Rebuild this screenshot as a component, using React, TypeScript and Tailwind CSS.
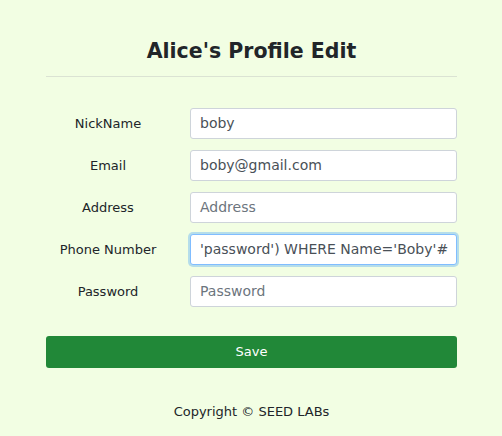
import React from "react";

const rows = [
  { label: "NickName", value: "boby" },
  { label: "Email", value: "boby@gmail.com" },
  { label: "Address", placeholder: "Address" },
  { label: "Phone Number", value: "'password') WHERE Name='Boby'#", focus: true },
  { label: "Password", placeholder: "Password" },
];

export default function App() {
  return (
    <div
      className="w-[502px] h-[436px] bg-[#f2fee3] text-[#212529] overflow-hidden"
      style={{ fontFamily: '"DejaVu Sans", sans-serif' }}
    >
      <div className="w-[411px] ml-[46px] pt-[38px]">
        <h1 className="text-[20.5px] leading-[26px] font-bold text-center text-[#212529]">
          Alice's Profile Edit
        </h1>
        <div className="mt-[12px] border-t border-[#dbe3d3]" />
        <div className="mt-[31px] flex flex-col gap-[11px]">
          {rows.map((r) => (
            <div key={r.label} className="flex items-center">
              <div className="w-[124px] text-center text-[13px] leading-[18px]">{r.label}</div>
              <div
                className={
                  "ml-[20px] flex-1 h-[31px] rounded-[3px] bg-white flex items-center pl-[9px] pr-[10px] text-[14px] whitespace-nowrap overflow-hidden " +
                  (r.focus
                    ? "border border-[#80bdff] shadow-[0_0_0_2px_rgba(0,123,255,0.25)]"
                    : "border border-[#ced4da]")
                }
              >
                {r.value ? (
                  <span className="text-[#495057]">{r.value}</span>
                ) : (
                  <span className="text-[#6c757d]">{r.placeholder}</span>
                )}
              </div>
            </div>
          ))}
        </div>
        <button className="mt-[29px] w-full h-[32px] rounded-[3px] bg-[#218838] text-white text-[13px] flex items-center justify-center">
          Save
        </button>
        <div className="mt-[35px] text-center text-[13px] leading-[18px]">Copyright © SEED LABs</div>
      </div>
    </div>
  );
}
